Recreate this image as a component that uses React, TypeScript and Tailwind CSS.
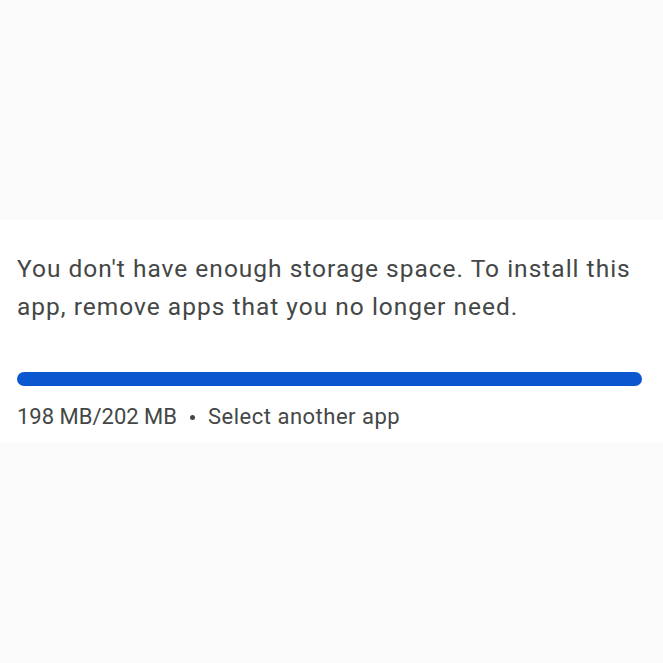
export default function App() {
  return (
    <div className="min-h-screen bg-[#fafafa] flex flex-col" style={{ fontFamily: 'Roboto, "Noto Sans", sans-serif' }}>
      <div className="h-[220px]"></div>
      <section className="bg-white px-[17px] pt-[30px] pb-[11px]">
        <p className="text-[24.5px] leading-[38px] text-[#444746] tracking-[1px]">
          You don't have enough storage space. To install this app, remove apps that you no longer need.
        </p>
        <div className="mt-[46px] h-[14px] w-[625px] rounded-full bg-[#0b57d0]"></div>
        <div className="mt-[16px] flex items-center text-[22px] leading-[30px] text-[#444746]">
          <span>198 MB/202 MB</span>
          <span className="mx-[13px] h-[5px] w-[5px] rounded-full bg-[#444746]"></span>
          <span className="tracking-[0.5px]">Select another app</span>
        </div>
      </section>
    </div>
  );
}
